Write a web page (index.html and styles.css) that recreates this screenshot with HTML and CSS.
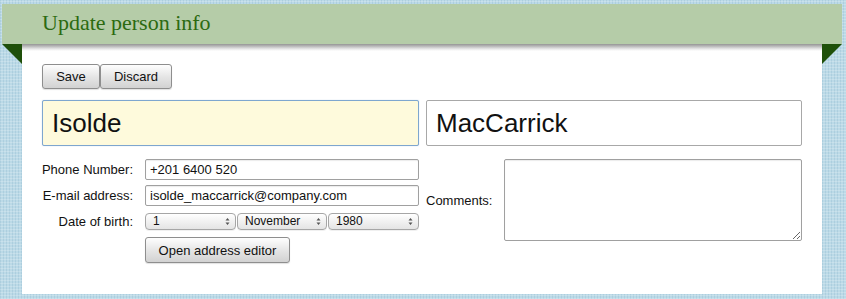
FILE: index.html
```html
<!DOCTYPE html>
<html>
<head>
<meta charset="utf-8">
<link rel="stylesheet" href="styles.css">
</head>
<body>
<div class="wrap">
  <div class="banner">
    <h1 class="title">Update person info</h1>
  </div>
  <div class="panel">
    <div class="toolbar">
      <button class="btn btn-save">Save</button>
      <button class="btn btn-discard">Discard</button>
    </div>
    <div class="names">
      <input class="name name-first" type="text" value="Isolde">
      <input class="name name-last" type="text" value="MacCarrick">
    </div>
    <div class="details">
      <div class="fields">
        <div class="row row-phone">
          <label class="lbl">Phone Number:</label>
          <input class="field" type="text" value="+201 6400 520">
        </div>
        <div class="row row-email">
          <label class="lbl">E-mail address:</label>
          <input class="field" type="text" value="isolde_maccarrick@company.com">
        </div>
        <div class="row row-date">
          <label class="lbl">Date of birth:</label>
          <div class="selects">
            <span class="sel sel-day"><select><option>1</option></select><svg class="arr" width="5" height="9" viewBox="0 0 5 9"><path d="M0.5 3.5 L2.5 1 L4.5 3.5 Z M0.5 5.5 L2.5 8 L4.5 5.5 Z" fill="#555"/></svg></span>
            <span class="sel sel-month"><select><option>November</option></select><svg class="arr" width="5" height="9" viewBox="0 0 5 9"><path d="M0.5 3.5 L2.5 1 L4.5 3.5 Z M0.5 5.5 L2.5 8 L4.5 5.5 Z" fill="#555"/></svg></span>
            <span class="sel sel-year"><select><option>1980</option></select><svg class="arr" width="5" height="9" viewBox="0 0 5 9"><path d="M0.5 3.5 L2.5 1 L4.5 3.5 Z M0.5 5.5 L2.5 8 L4.5 5.5 Z" fill="#555"/></svg></span>
          </div>
        </div>
        <div class="row row-addr">
          <span class="lbl"></span>
          <button class="btn btn-addr">Open address editor</button>
        </div>
      </div>
      <div class="comments">
        <label class="lbl-comments">Comments:</label>
        <textarea class="comment-box"></textarea>
      </div>
    </div>
  </div>
</div>
</body>
</html>
```
FILE: styles.css
```css
html, body {
  margin: 0;
  padding: 0;
}
body {
  width: 846px;
  height: 299px;
  overflow: hidden;
  font-family: "Liberation Sans", Arial, sans-serif;
  font-size: 13px;
  color: #111;
  background-color: #bcdae7;
  background-image:
    repeating-linear-gradient(0deg, rgba(255,255,255,0.2) 0 1px, transparent 1px 3px),
    repeating-linear-gradient(90deg, rgba(110,160,190,0.2) 0 1px, transparent 1px 3px);
}
.wrap {
  padding-top: 4px;
}
.banner {
  position: relative;
  margin-left: 2px;
  width: 840px;
  height: 40px;
  background: #b5cca8;
  box-sizing: border-box;
  padding-left: 40px;
  display: flex;
  align-items: center;
}
.banner::before,
.banner::after {
  content: "";
  position: absolute;
  top: 40px;
  width: 0;
  height: 0;
  border-top: 20px solid #1f500a;
}
.banner::before {
  left: 0;
  border-left: 20px solid transparent;
}
.banner::after {
  left: 820px;
  border-right: 20px solid transparent;
}
.title {
  margin: 0 0 3px 0;
  font-family: "Liberation Serif", "Times New Roman", serif;
  font-weight: normal;
  font-size: 22px;
  line-height: 24px;
  color: #2c6a10;
}
.panel {
  margin-left: 22px;
  width: 800px;
  height: 250px;
  box-sizing: border-box;
  padding: 20px 20px 0 20px;
  background:
    linear-gradient(#959595 0, #b5b5b5 2px, #e8e8e8 5px, #ffffff 7px) top left / 100% 8px no-repeat,
    #ffffff;
}
.toolbar {
  display: flex;
  height: 25px;
}
.btn {
  font-family: "Liberation Sans", Arial, sans-serif;
  font-size: 13px;
  color: #111;
  border: 1px solid #8e8e8e;
  border-radius: 3px;
  background: linear-gradient(#fefefe, #e6e6e6 50%, #d2d2d2);
  box-shadow: 0 1px 1px rgba(0,0,0,0.12);
  padding: 0;
  margin: 0;
  box-sizing: border-box;
}
.btn-save {
  width: 58px;
  height: 25px;
}
.btn-discard {
  width: 72px;
  height: 25px;
}
.names {
  display: flex;
  gap: 7px;
  margin-top: 11px;
}
.name {
  height: 46px;
  box-sizing: border-box;
  margin: 0;
  padding: 0 0 0 9px;
  font-family: "Liberation Sans", Arial, sans-serif;
  font-size: 26px;
  color: #111;
  border: 1px solid #a8a8a8;
  border-radius: 2px;
  background: #fff;
  outline: none;
}
.name-first {
  width: 377px;
  background: #fefadc;
  border-color: #7ea6cf;
  box-shadow: 0 0 1px rgba(90,140,200,0.5);
}
.name-last {
  width: 376px;
}
.details {
  display: flex;
  align-items: flex-start;
  margin-top: 13px;
}
.fields {
  display: flex;
  flex-direction: column;
  width: 377px;
}
.row {
  display: flex;
  align-items: center;
  gap: 12px;
}
.row-email {
  margin-top: 5px;
}
.row-date {
  margin-top: 7px;
}
.row-addr {
  margin-top: 7px;
}
.lbl {
  width: 91px;
  flex: none;
  display: flex;
  justify-content: flex-end;
  white-space: nowrap;
  font-size: 13px;
}
.field {
  width: 274px;
  height: 21px;
  box-sizing: border-box;
  margin: 0;
  padding: 0 0 0 4px;
  font-family: "Liberation Sans", Arial, sans-serif;
  font-size: 13px;
  color: #111;
  border: 1px solid #a0a0a0;
  border-radius: 2px;
  box-shadow: inset 0 1px 1px rgba(0,0,0,0.08);
  background: #fff;
}
.selects {
  display: flex;
  gap: 1px;
}
.sel {
  position: relative;
  display: block;
  height: 17px;
}
.sel select {
  -webkit-appearance: none;
  appearance: none;
  display: block;
  height: 17px;
  width: 100%;
  box-sizing: border-box;
  margin: 0;
  padding: 0 0 0 7px;
  font-family: "Liberation Sans", Arial, sans-serif;
  font-size: 12px;
  line-height: 15px;
  color: #111;
  border: 1px solid #a6a6a6;
  border-radius: 4px;
  background: linear-gradient(#ffffff, #f1f1f1 50%, #e4e4e4);
  box-shadow: 0 1px 0 rgba(0,0,0,0.06);
}
.sel-day { width: 91px; }
.sel-month { width: 90px; }
.sel-year { width: 91px; }
.arr {
  position: absolute;
  right: 6px;
  top: 4px;
}
.btn-addr {
  width: 145px;
  height: 26px;
}
.comments {
  display: flex;
  align-items: center;
  margin-left: 7px;
}
.lbl-comments {
  width: 78px;
  flex: none;
  font-size: 13px;
}
.comment-box {
  width: 298px;
  height: 82px;
  box-sizing: border-box;
  margin: 0;
  border: 1px solid #a0a0a0;
  border-radius: 2px;
  background: #fff;
  box-shadow: inset 0 1px 1px rgba(0,0,0,0.08);
}
```
